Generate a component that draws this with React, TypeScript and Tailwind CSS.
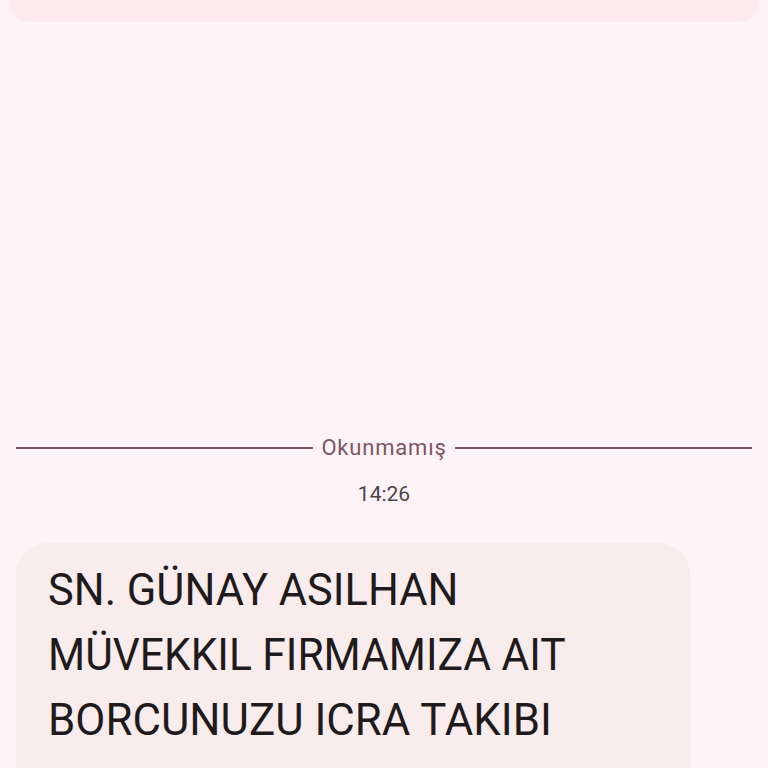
export default function App() {
  return (
    <div className="h-[768px] w-[768px] overflow-hidden bg-[#fef3f6] flex flex-col" style={{ fontFamily: 'Roboto, "Noto Sans", sans-serif' }}>
      <div className="mx-[8px] h-[22px] shrink-0 rounded-b-[26px] bg-[#fdeaee]" />
      <div className="mt-[412px] flex h-[28px] shrink-0 items-center gap-[8px] px-[16px]">
        <div className="h-[1.5px] flex-1 bg-[#7d5563]" />
        <span className="text-[22px] leading-[28px] tracking-[0.8px] text-[#7d5563]">Okunmamış</span>
        <div className="h-[1.5px] flex-1 bg-[#7d5563]" />
      </div>
      <div className="mt-[18px] h-[28px] shrink-0 text-center text-[21px] leading-[28px] text-[#4a4447]">14:26</div>
      <div className="ml-[16px] mt-[35px] h-[300px] w-[674px] shrink-0 rounded-[32px] bg-[#f9eced] pl-[32px] pr-[24px] pt-[14px]">
        <div className="whitespace-nowrap text-[45px] leading-[65px] text-[#1f1a1c]">
          <p className="origin-left scale-x-[0.963]">SN. GÜNAY ASILHAN</p>
          <p className="origin-left scale-x-[0.945]">MÜVEKKIL FIRMAMIZA AIT</p>
          <p className="origin-left scale-x-[0.973]">BORCUNUZU ICRA TAKIBI</p>
        </div>
      </div>
    </div>
  );
}
